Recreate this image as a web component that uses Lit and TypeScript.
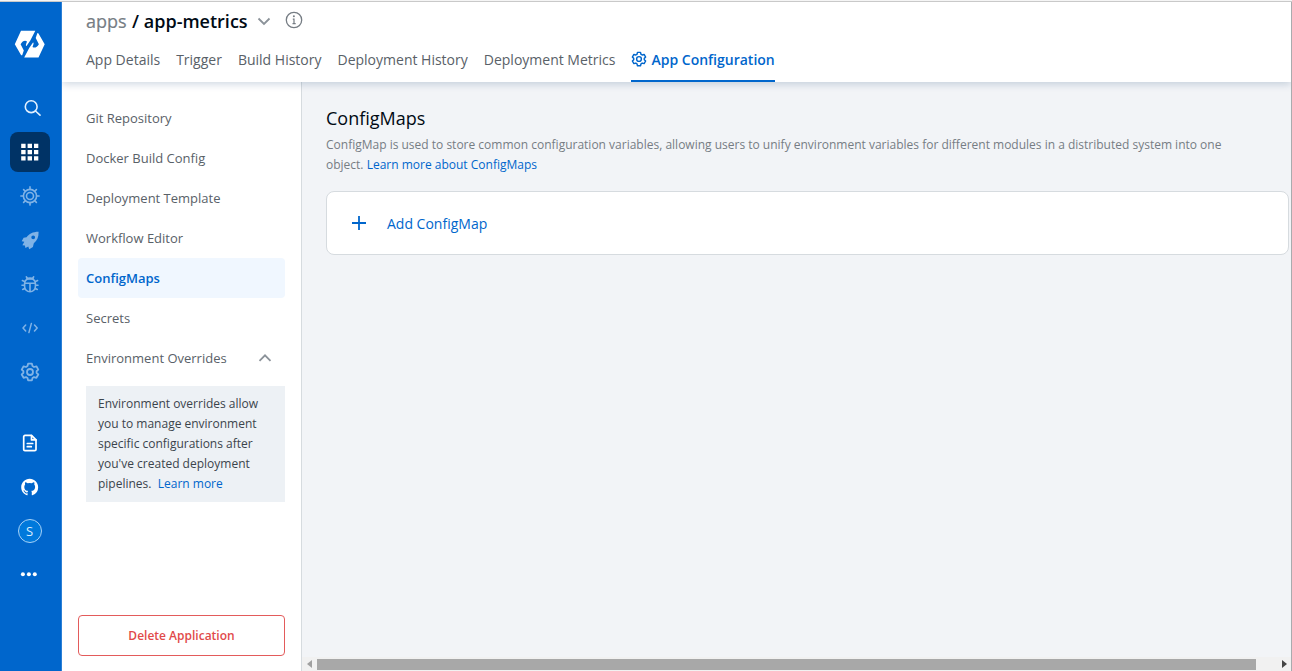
import { LitElement, html, css, svg } from "lit";
import { customElement } from "lit/decorators.js";
import { classMap } from "lit/directives/class-map.js";

const gear = svg`<g fill="none" stroke="currentColor" stroke-width="1.8" stroke-linejoin="round"><circle cx="10" cy="10" r="3"/><path d="M8.1 1.7h3.8l.6 2.400 1.500.9 2.400-.7 1.900 3.300-1.700 1.600v1.700l1.700 1.600-1.900 3.300-2.400-.7-1.500.9-.6 2.400H8.100l-.6-2.400-1.500-.9-2.400.7-1.900-3.300 1.700-1.600V9.200L1.700 7.600l1.900-3.300 2.400.7 1.500-.9z"/></g>`;

const icons = {
  search: svg`<g fill="none" stroke="currentColor" stroke-width="1.600" stroke-linecap="round"><circle cx="10.200" cy="8.700" r="5.900"/><path d="M14.500 13l4.500 4.200"/></g>`,
  grid: svg`<path fill="currentColor" d="M1.200 1.700h4.400v4.200H1.200zM7.600 1.700h4.400v4.200H7.600zM14 1.700h4.300v4.200H14zM1.200 8h4.400v4.200H1.200zM7.600 8h4.400v4.200H7.600zM14 8h4.300v4.200H14zM1.200 14.300h4.400v4.200H1.200zM7.600 14.300h4.400v4.200H7.600zM14 14.300h4.300v4.200H14z"/>`,
  helm: svg`<g fill="none" stroke="currentColor" stroke-width="1.600" stroke-linecap="round"><circle cx="10" cy="10" r="6.600"/><circle cx="10" cy="10" r="3.500"/><path d="M10 3.400V.9M10 16.600v2.500M3.400 10H.9M16.600 10h2.500M5.300 5.300L3.600 3.600M14.700 5.300l1.700-1.700M5.300 14.700l-1.700 1.700M14.700 14.700l1.700 1.700"/></g>`,
  rocket: svg`<path fill="currentColor" fill-rule="evenodd" d="M18.600 1.800C12.700 1.900 9.200 3.800 6.600 7.300L3.600 7.700 1.700 11.300l2.600.5-1.900 3.400 2.500.3.500 2.500 2.900-1.600.9 2.800 3.700-2.200.9-3.800C17.200 10.700 18.700 7.200 18.600 1.800zM13.200 5.400a1.900 1.900 0 1 1 0 3.800 1.900 1.900 0 0 1 0-3.800z"/>`,
  bug: svg`<g fill="none" stroke="currentColor" stroke-width="1.600" stroke-linecap="round"><path d="M4.600 9.200a5.400 4.800 0 0 1 10.800 0v3.200a5.400 5.400 0 0 1-10.800 0zM4.600 9.300h10.800M10 9.300v8.300M4.600 7.600L2.400 6.500M15.400 7.600l2.200-1.100M4.600 11.300H2M15.400 11.300H18M5 14.300l-2.300 1.200M15 14.300l2.300 1.200M7.500 4.600L6.300 2.800M12.500 4.600L13.700 2.800"/><path d="M7.300 4.600h5.400" stroke-width="2.200"/></g>`,
  code: svg`<g fill="none" stroke="currentColor" stroke-width="1.500" stroke-linecap="round" stroke-linejoin="round"><path d="M5.700 7L3 10l2.700 3M14.500 7l2.700 3-2.700 3M11.400 5.400L8.900 14.600"/></g>`,
  gear,
  doc: svg`<g fill="none" stroke="currentColor" stroke-width="1.700" stroke-linecap="round" stroke-linejoin="round"><path d="M5 2.400h6.500L16 6.900v9.500a1.300 1.300 0 0 1-1.300 1.300H5a1.300 1.300 0 0 1-1.300-1.300V3.700A1.300 1.300 0 0 1 5 2.400z"/><path d="M11.500 2.700v4.200H16M7.300 10.500h5.400M7.300 13.700h4"/></g>`,
  github: svg`<path fill="currentColor" transform="translate(1.200 1.800) scale(1.060)" d="M8 0C3.580 0 0 3.580 0 8c0 3.540 2.290 6.530 5.470 7.590.4.070.55-.17.55-.38 0-.19-.01-.82-.01-1.490-2.010.37-2.530-.49-2.690-.94-.09-.23-.48-.94-.82-1.130-.28-.15-.68-.52-.01-.53.63-.01 1.080.58 1.230.82.72 1.210 1.870.87 2.330.66.07-.52.28-.87.51-1.070-1.780-.2-3.640-.89-3.640-3.950 0-.87.31-1.590.82-2.150-.08-.2-.36-1.020.08-2.120 0 0 .67-.21 2.200.82a7.600 7.600 0 0 1 4 0c1.530-1.040 2.200-.82 2.200-.82.44 1.100.16 1.920.08 2.120.51.56.82 1.270.82 2.150 0 3.070-1.870 3.750-3.650 3.950.29.25.54.73.54 1.480 0 1.070-.01 1.930-.01 2.200 0 .21.15.46.55.38A8.010 8.010 0 0 0 16 8c0-4.420-3.580-8-8-8z"/>`,
  more: svg`<g fill="currentColor"><circle cx="2.900" cy="9.200" r="2"/><circle cx="8.900" cy="9.200" r="2"/><circle cx="14.800" cy="9.200" r="2"/></g>`,
};

const logoHalf = "M11 6.800H25.300L20.300 16.500 16.500 22C15.500 22 15.800 20.300 17 17.500 15 16 12.500 17 10.600 20.200L13.800 26.500 12.200 31.200Q11.500 31.600 11 30.900L4.800 20.200Z";

@customElement("side-nav")
export class SideNav extends LitElement {
  static styles = css`
    :host { display: flex; flex-direction: column; align-items: center; gap: 4px; color: #fff; }
    .logo { width: 40px; height: 40px; margin-bottom: 20px; }
    .item { width: 40px; height: 40px; border-radius: 8px; display: flex; align-items: center; justify-content: center; }
    .item svg { width: 20px; height: 20px; }
    .dim { color: #80b3e6; }
    .soft { color: #e2f0ff; }
    .soft svg { margin-left: 2px; }
    .active { background: #003366; }
    .gap { margin-top: 27px; }
    .avatar { width: 22px; height: 22px; border: 1px solid #a8d2f7; border-radius: 50%; background: #0079dc; font-size: 13px; line-height: 22px; text-align: center; color: #d8edff; }
  `;
  icon(kind: keyof typeof icons, cls = "") {
    return html`<div class=${classMap({ item: true, dim: cls === "dim", soft: cls === "soft", active: cls === "active", gap: cls === "gap" })}><svg viewBox="0 0 20 20">${icons[kind]}</svg></div>`;
  }
  render() {
    return html`
      <svg class="logo" viewBox="0 0 40 40">
        <g fill="#fff"><path d=${logoHalf}/><path d=${logoHalf} transform="rotate(180 19.750 20.200)"/></g>
      </svg>
      ${this.icon("search", "soft")} ${this.icon("grid", "active")} ${this.icon("helm", "dim")}
      ${this.icon("rocket", "dim")} ${this.icon("bug", "dim")} ${this.icon("code", "dim")}
      ${this.icon("gear", "dim")} ${this.icon("doc", "gap")} ${this.icon("github")}
      <div class="item"><div class="avatar">S</div></div>
      ${this.icon("more")}
    `;
  }
}

@customElement("app-root")
export class AppRoot extends LitElement {
  static styles = css`
    :host { display: flex; flex-direction: column; box-sizing: border-box; height: 671px; width: 1292px; overflow: hidden; font-family: "Open Sans", "Noto Sans", sans-serif; color: #3b444c; background: #fff; }
    * { box-sizing: border-box; }
    .topline { height: 2px; flex: none; background: #f5f5f5; border-bottom: 1px solid #c9c9c9; }
    .shell { flex: 1; display: flex; min-height: 0; }
    side-nav { flex: none; width: 62px; padding: 22px 2px 0 0; background: #0066cc; border-right: 1px solid #2b7fd6; }
    .page { flex: 1; min-width: 0; display: flex; flex-direction: column; border-right: 1px solid #a9abae; }
    header { position: relative; height: 80px; flex: none; padding: 0 24px; background: #fff; box-shadow: 0 2px 8px rgba(0, 50, 100, 0.2); clip-path: inset(0 0 -16px 0); }
    .crumbs { display: flex; align-items: center; height: 38px; font-size: 18px; font-weight: 600; color: #000a14; white-space: pre; }
    .apps { color: #767d84; font-weight: 400; -webkit-text-stroke: 0.2px #767d84; margin-right: 0.8px; }
    .chevron { width: 16px; height: 16px; margin-left: 8px; }
    .info { width: 18px; height: 18px; margin: -2px 0 0 13px; }
    .tabs { display: flex; gap: 16px; height: 42px; }
    .tab { display: flex; align-items: center; height: 42px; padding-bottom: 2px; font-size: 14px; color: #596168; border-bottom: 2px solid transparent; white-space: nowrap; }
    .tab.on { color: #0066cc; font-weight: 600; border-color: #0066cc; }
    .tab svg { width: 16px; height: 16px; margin-right: 4px; }
    .body { flex: 1; display: flex; min-height: 0; }
    aside { width: 240px; flex: none; padding: 16px 16px 15px; display: flex; flex-direction: column; border-right: 1px solid #d6dbdf; background: #fff; }
    .link { height: 40px; padding: 0 12px 0 8px; display: flex; align-items: center; justify-content: space-between; font-size: 13px; color: #596168; border-radius: 4px; }
    .link.on { background: #f0f7ff; color: #0066cc; font-weight: 600; }
    .link svg { width: 16px; height: 16px; }
    .note { margin: 8px 0 0 8px; padding: 8px 12px; height: 116px; font-size: 12px; line-height: 20px; color: #3b444c; background: #edf1f5; white-space: pre; }
    a { color: #0066cc; }
    .delete { margin-top: auto; height: 41px; border: 1px solid #e35b5b; border-radius: 4px; color: #e14a4a; font-size: 12px; font-weight: 600; display: flex; align-items: center; justify-content: center; }
    main { flex: 1; min-width: 0; display: flex; flex-direction: column; background: #f2f4f7; }
    .content { flex: 1; padding: 24px 2px 0 24px; }
    h1 { margin: 0; font-size: 18px; font-weight: 400; line-height: 24px; color: #000a14; }
    .desc { margin: 5px 0 16px; font-size: 12px; line-height: 20px; color: #767d84; max-width: 920px; }
    .card { height: 64px; border: 1px solid #d6dbdf; border-radius: 8px; background: #fff; display: flex; align-items: center; padding-left: 22px; font-size: 14px; color: #0066cc; }
    .card svg { width: 20px; height: 20px; margin-right: 18px; }
    .scroll { height: 14px; flex: none; background: #f1f1f1; display: flex; align-items: center; justify-content: space-between; padding: 0 4px 0 5px; }
    .thumb { width: 939px; height: 11px; background: #a8a8a8; margin: 0 auto 0 5px; }
    .scroll svg { width: 5px; height: 8px; }
  `;
  tabs = ["App Details", "Trigger", "Build History", "Deployment History", "Deployment Metrics"];
  links = ["Git Repository", "Docker Build Config", "Deployment Template", "Workflow Editor", "ConfigMaps", "Secrets"];
  render() {
    return html`
      <div class="topline"></div>
      <div class="shell">
        <side-nav></side-nav>
        <div class="page">
          <header>
            <div class="crumbs"><span class="apps">apps</span><span> / app-metrics</span><svg class="chevron" viewBox="0 0 16 16"><path d="M2.500 5.500L8 11l5.500-5.500" fill="none" stroke="#8b9299" stroke-width="1.800"/></svg><svg class="info" viewBox="0 0 18 18"><circle cx="9" cy="9" r="7.700" fill="none" stroke="#767d84" stroke-width="1.300"/><path d="M7.800 8.200H9v4.500M7.500 12.700h3.200" fill="none" stroke="#767d84" stroke-width="1.200"/><circle cx="8.900" cy="5.300" r="1" fill="#767d84"/></svg></div>
            <nav class="tabs">
              ${this.tabs.map((t) => html`<div class="tab">${t}</div>`)}
              <div class="tab on"><svg viewBox="0 0 20 20">${gear}</svg>App Configuration</div>
            </nav>
          </header>
          <div class="body">
            <aside>
              ${this.links.map((l) => html`<div class=${classMap({ link: true, on: l === "ConfigMaps" })}>${l}</div>`)}
              <div class="link"><span>Environment Overrides</span><svg viewBox="0 0 16 16"><path d="M2.500 10.800L8 5.300l5.500 5.500" fill="none" stroke="#8b9299" stroke-width="1.800"/></svg></div>
              <div class="note">Environment overrides allow
you to manage environment
specific configurations after
you've created deployment
pipelines.  <a>Learn more</a></div>
              <div class="delete">Delete Application</div>
            </aside>
            <main>
              <div class="content">
                <h1>ConfigMaps</h1>
                <p class="desc">ConfigMap is used to store common configuration variables, allowing users to unify environment variables for different modules in a distributed system into one object. <a>Learn more about ConfigMaps</a></p>
                <div class="card"><svg viewBox="0 0 20 20"><path d="M10 3v14M3 10h14" stroke="#0066cc" stroke-width="1.800"/></svg>Add ConfigMap</div>
              </div>
              <div class="scroll">
                <svg viewBox="0 0 5 8"><path d="M5 0v8L0 4z" fill="#a0a0a0"/></svg>
                <div class="thumb"></div>
                <svg viewBox="0 0 5 8"><path d="M0 0v8l5-4z" fill="#444"/></svg>
              </div>
            </main>
          </div>
        </div>
      </div>
    `;
  }
}
